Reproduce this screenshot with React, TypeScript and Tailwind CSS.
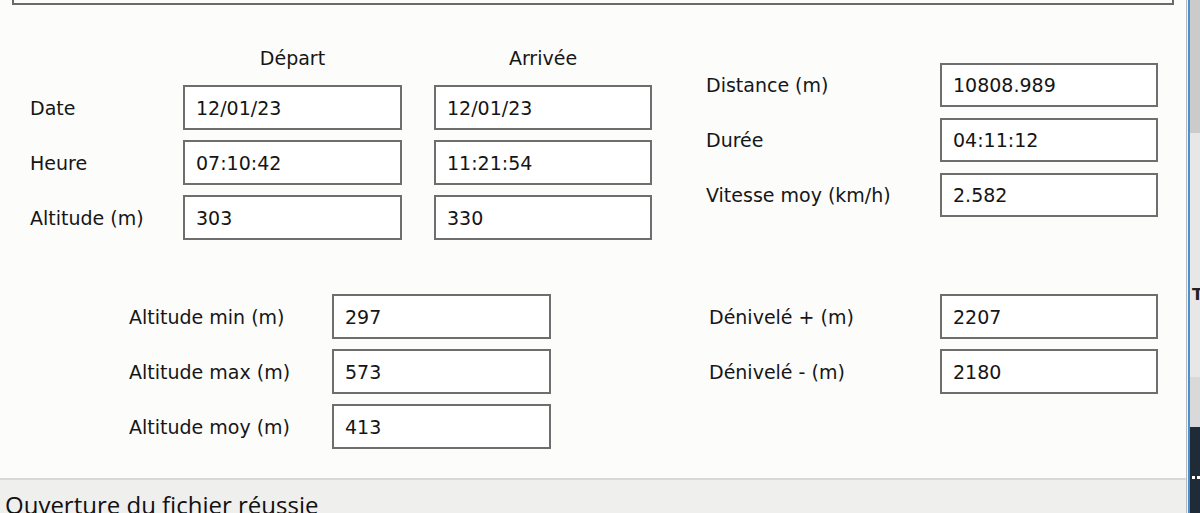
import React from 'react';

const FONT = { fontFamily: '"DejaVu Sans", Verdana, sans-serif' };

type Row = { label: string; values: string[] };

const TOP_ROWS: Row[] = [
  { label: 'Date', values: ['12/01/23', '12/01/23'] },
  { label: 'Heure', values: ['07:10:42', '11:21:54'] },
  { label: 'Altitude (m)', values: ['303', '330'] },
];

const SUMMARY: Row[] = [
  { label: 'Distance (m)', values: ['10808.989'] },
  { label: 'Durée', values: ['04:11:12'] },
  { label: 'Vitesse moy (km/h)', values: ['2.582'] },
];

const ALTITUDES: Row[] = [
  { label: 'Altitude min (m)', values: ['297'] },
  { label: 'Altitude max (m)', values: ['573'] },
  { label: 'Altitude moy (m)', values: ['413'] },
];

const DENIVELES: Row[] = [
  { label: 'Dénivelé + (m)', values: ['2207'] },
  { label: 'Dénivelé - (m)', values: ['2180'] },
];

function Field({ value, width }: { value: string; width: string }) {
  return (
    <div
      className={`flex h-full items-center border-2 border-[#6e6e6e] bg-white pl-[11px] text-[19px] leading-[22px] text-[#151515] ${width}`}
    >
      {value}
    </div>
  );
}

export default function App() {
  return (
    <div
      className="flex h-[513px] w-[1200px] overflow-hidden bg-[#fcfcfb] text-[#161616]"
      style={FONT}
    >
      {/* Main window column */}
      <div className="flex w-[1187px] shrink-0 flex-col border-r border-[#b9b9b9]">
        <div className="h-[478px] shrink-0 bg-[#fcfcfb]">
          {/* bottom of the group box above */}
          <div className="mx-[12px] h-[5px] border-2 border-t-0 border-[#6a6a6a]" />

          {/* upper section */}
          <div className="flex items-start">
            <div className="ml-[30px] mt-[42px] w-[622px] shrink-0">
              <div className="flex h-[22px] text-[19px] leading-[22px]">
                <div className="w-[153px]" />
                <div className="w-[219px] text-center">Départ</div>
                <div className="w-[32px]" />
                <div className="w-[218px] text-center">Arrivée</div>
              </div>
              <div className="mt-[16px] flex flex-col gap-[10px]">
                {TOP_ROWS.map((r) => (
                  <div key={r.label} className="flex h-[45px] items-center">
                    <span className="w-[153px] text-[19px] leading-[22px]">{r.label}</span>
                    <Field value={r.values[0]} width="w-[219px]" />
                    <div className="w-[32px]" />
                    <Field value={r.values[1]} width="w-[218px]" />
                  </div>
                ))}
              </div>
            </div>

            <div className="ml-[54px] mt-[58px] flex w-[452px] shrink-0 flex-col gap-[11px]">
              {SUMMARY.map((r) => (
                <div key={r.label} className="flex h-[44px] items-center">
                  <span className="w-[234px] text-[19px] leading-[22px]">{r.label}</span>
                  <Field value={r.values[0]} width="w-[218px]" />
                </div>
              ))}
            </div>
          </div>

          {/* lower section */}
          <div className="mt-[54px] flex items-start">
            <div className="ml-[129px] flex w-[422px] shrink-0 flex-col gap-[10px]">
              {ALTITUDES.map((r) => (
                <div key={r.label} className="flex h-[45px] items-center">
                  <span className="w-[203px] text-[19px] leading-[22px]">{r.label}</span>
                  <Field value={r.values[0]} width="w-[219px]" />
                </div>
              ))}
            </div>
            <div className="ml-[158px] flex w-[449px] shrink-0 flex-col gap-[10px]">
              {DENIVELES.map((r) => (
                <div key={r.label} className="flex h-[45px] items-center">
                  <span className="w-[231px] text-[19px] leading-[22px]">{r.label}</span>
                  <Field value={r.values[0]} width="w-[218px]" />
                </div>
              ))}
            </div>
          </div>
        </div>

        {/* status bar */}
        <div className="flex-1 border-t-2 border-[#d8d8d6] bg-[#efefee] pl-[5px] pt-[9px]">
          <span
            className="whitespace-nowrap text-[24px] leading-[32px] text-[#111]"
            style={{ fontFamily: '"Open Sans", sans-serif' }}
          >
            Ouverture du fichier réussie
          </span>
        </div>
      </div>

      {/* window edge */}
      <div className="w-[1px] shrink-0 bg-[#f4f4f4]" />
      <div className="w-[2px] shrink-0 bg-[#4a8fd0]" />

      {/* neighbouring window strip */}
      <div className="flex flex-1 flex-col overflow-hidden">
        <div className="h-[133px] bg-[#cbcbcb]" />
        <div className="h-[244px] bg-[#e7e7e7] pt-[154px]">
          <span className="block pl-[2px] text-[16px] font-bold leading-[16px] text-[#222]">T</span>
        </div>
        <div className="h-[50px] bg-[#d9d9d9]" />
        <div className="flex flex-1 items-start bg-[#1f2b36] pl-[2px] pt-[49px]">
          <span className="flex gap-[2px]">
            <span className="h-[3px] w-[3px] bg-white" />
            <span className="h-[3px] w-[3px] bg-white" />
          </span>
        </div>
      </div>
    </div>
  );
}
